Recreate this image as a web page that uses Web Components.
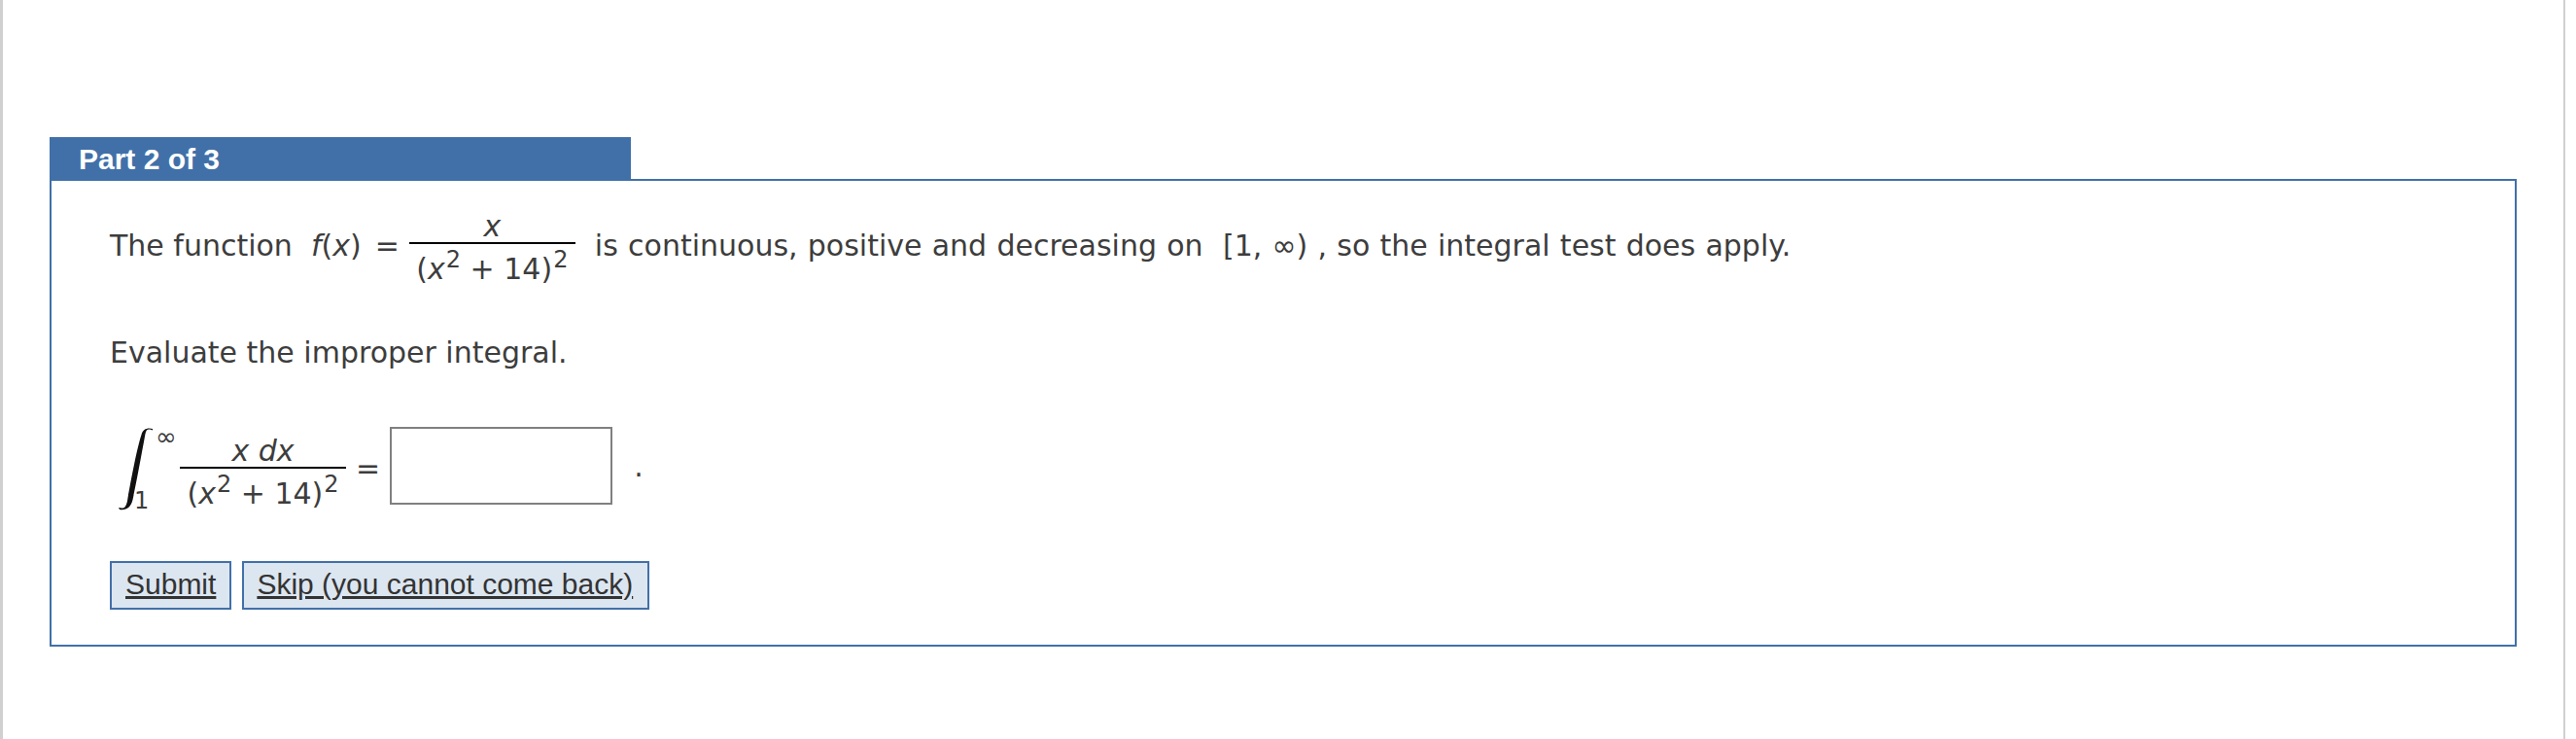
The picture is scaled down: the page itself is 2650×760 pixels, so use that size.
<!DOCTYPE html>
<html lang="en">
<head>
<meta charset="utf-8">
<title>Part 2 of 3</title>
<style>
  html, body { margin: 0; padding: 0; background: #fff; }
  .eqn { margin-left: 14px; margin-right: 10px; }
  .rest { margin-left: 20px; word-spacing: 0.7px; }
</style>
</head>
<body>
<question-page>
  <question-part heading="Part 2 of 3">
    <math-line class="first">
      <span>The function&nbsp; <i>f</i>(<i>x</i>)</span><span class="eqn">=</span>
      <math-fraction>
        <i slot="top">x</i>
        <span slot="bottom">(<i>x</i><math-sup>2</math-sup> + 14)<math-sup>2</math-sup></span>
      </math-fraction>
      <span class="rest">is continuous, positive and decreasing on&nbsp; [1, ∞) , so the integral test does apply.</span>
    </math-line>
    <math-line class="second"><span>Evaluate the improper integral.</span></math-line>
    <math-line class="third">
      <integral-sign upper="∞" lower="1"></integral-sign>
      <math-fraction>
        <i slot="top">x dx</i>
        <span slot="bottom">(<i>x</i><math-sup>2</math-sup> + 14)<math-sup>2</math-sup></span>
      </math-fraction>
      <span class="eq">=</span>
      <answer-box></answer-box>
      <span class="dot">.</span>
    </math-line>
    <button-row>
      <action-button>Submit</action-button>
      <action-button class="skip">Skip (you cannot come back)</action-button>
    </button-row>
  </question-part>
</question-page>

<script>
// Small helper so each element just declares its markup
class ShadowBase extends HTMLElement {
    constructor() {
        super();
        this.attachShadow({ mode: 'open' });
    }
    connectedCallback() {
        this.shadowRoot.innerHTML = this.markup();
    }
}

class QuestionPage extends ShadowBase {
    markup() {
        return `<style>
            :host { display: block; box-sizing: border-box; width: 2639px; height: 760px;
                border-left: 3px solid #d0d0d0; border-right: 2px solid #d0d0d0;
                padding: 141px 48px 0 48px; background: #fff; }
        </style><slot></slot>`;
    }
}

class QuestionPart extends ShadowBase {
    markup() {
        return `<style>
            :host { display: block; }
            .tab { box-sizing: border-box; width: 598px; height: 45px; margin-bottom: -2px;
                position: relative; background: #4170a8; color: #fff;
                font: bold 30px/46px "Liberation Sans", sans-serif; padding-left: 30px; }
            .body { box-sizing: border-box; height: 481px; border: 2px solid #4170a8; padding: 0 0 0 60px; }
        </style>
        <div class="tab">${this.getAttribute('heading')}</div>
        <div class="body"><slot></slot></div>`;
    }
}

class MathLine extends ShadowBase {
    markup() {
        return `<style>
            :host { display: flex; align-items: center; color: #3d3d3d; white-space: pre;
                font: 30px/35px "DejaVu Sans", Verdana, sans-serif; }
            :host(.first) { height: 79px; margin-top: 27px; }
            :host(.second) { height: 35px; margin-top: 53px; }
            :host(.third) { height: 80px; margin-top: 59px; align-items: flex-start; }
            ::slotted(integral-sign) { margin-top: 1px; }
            ::slotted(.eq) { margin: 25px 10px 0 10px; }
            ::slotted(.dot) { margin: 23px 0 0 22px; }
        </style><slot></slot>`;
    }
}

class MathFraction extends ShadowBase {
    markup() {
        return `<style>
            :host { display: inline-flex; flex-direction: column; width: 171px; text-align: center; }
            :host-context(.third) { margin-top: 5px; }
            .top { height: 38px; box-sizing: border-box; line-height: 39px; border-bottom: 2px solid #000; }
            .bottom { height: 41px; box-sizing: border-box; line-height: 42px; padding-top: 5px; }
        </style>
        <div class="top"><slot name="top"></slot></div>
        <div class="bottom"><slot name="bottom"></slot></div>`;
    }
}

class MathSup extends ShadowBase {
    markup() {
        return `<style>
            :host { display: inline; font-size: 24px; line-height: 0; vertical-align: 12px; margin-left: 1px; }
        </style><slot></slot>`;
    }
}

class IntegralSign extends ShadowBase {
    markup() {
        return `<style>
            :host { display: grid; width: 72px; height: 86px; font-size: 24px; line-height: 24px; }
            svg, span { grid-area: 1 / 1; }
            svg { display: block; margin-left: 9px; filter: blur(0.5px); }
            .up { margin: -3px 0 0 47px; font-size: 26px; }
            .lo { margin: 63px 0 0 25px; }
        </style>
        <svg width="38" height="86" viewBox="0 0 38 86">
          <path d="M35 2.500C31 0.500 28.500 1 27.500 6C25 20 18 58 14.500 74C12.500 82 8 85 1 84L0 82L3 82.500C6.500 83 8.500 80 9.500 72C12 58 19 20 23.500 7C25 1 30 -0.500 35 1Z" fill="#111"/>
        </svg>
        <span class="up">${this.getAttribute('upper')}</span>
        <span class="lo">${this.getAttribute('lower')}</span>`;
    }
}

class AnswerBox extends ShadowBase {
    markup() {
        return `<style>
            :host { display: block; box-sizing: border-box; width: 229px; height: 80px;
                border: 2px solid #808080; background: #fff; }
        </style>`;
    }
}

class ButtonRow extends ShadowBase {
    markup() {
        return `<style>
            :host { display: flex; gap: 11px; margin-top: 58px; }
        </style><slot></slot>`;
    }
}

class ActionButton extends ShadowBase {
    markup() {
        return `<style>
            :host { display: block; box-sizing: border-box; height: 50px; padding: 0 14px; color: #333;
                border: 2px solid #4170a8; background: #dce6f0;
                font: 30px/44px "Liberation Sans", sans-serif; text-decoration: underline; }
            :host(.skip) { padding: 0 15px 0 13px; }
        </style><slot></slot>`;
    }
}

customElements.define('question-page', QuestionPage);
customElements.define('question-part', QuestionPart);
customElements.define('math-line', MathLine);
customElements.define('math-fraction', MathFraction);
customElements.define('math-sup', MathSup);
customElements.define('integral-sign', IntegralSign);
customElements.define('answer-box', AnswerBox);
customElements.define('button-row', ButtonRow);
customElements.define('action-button', ActionButton);
</script>
</body>
</html>
